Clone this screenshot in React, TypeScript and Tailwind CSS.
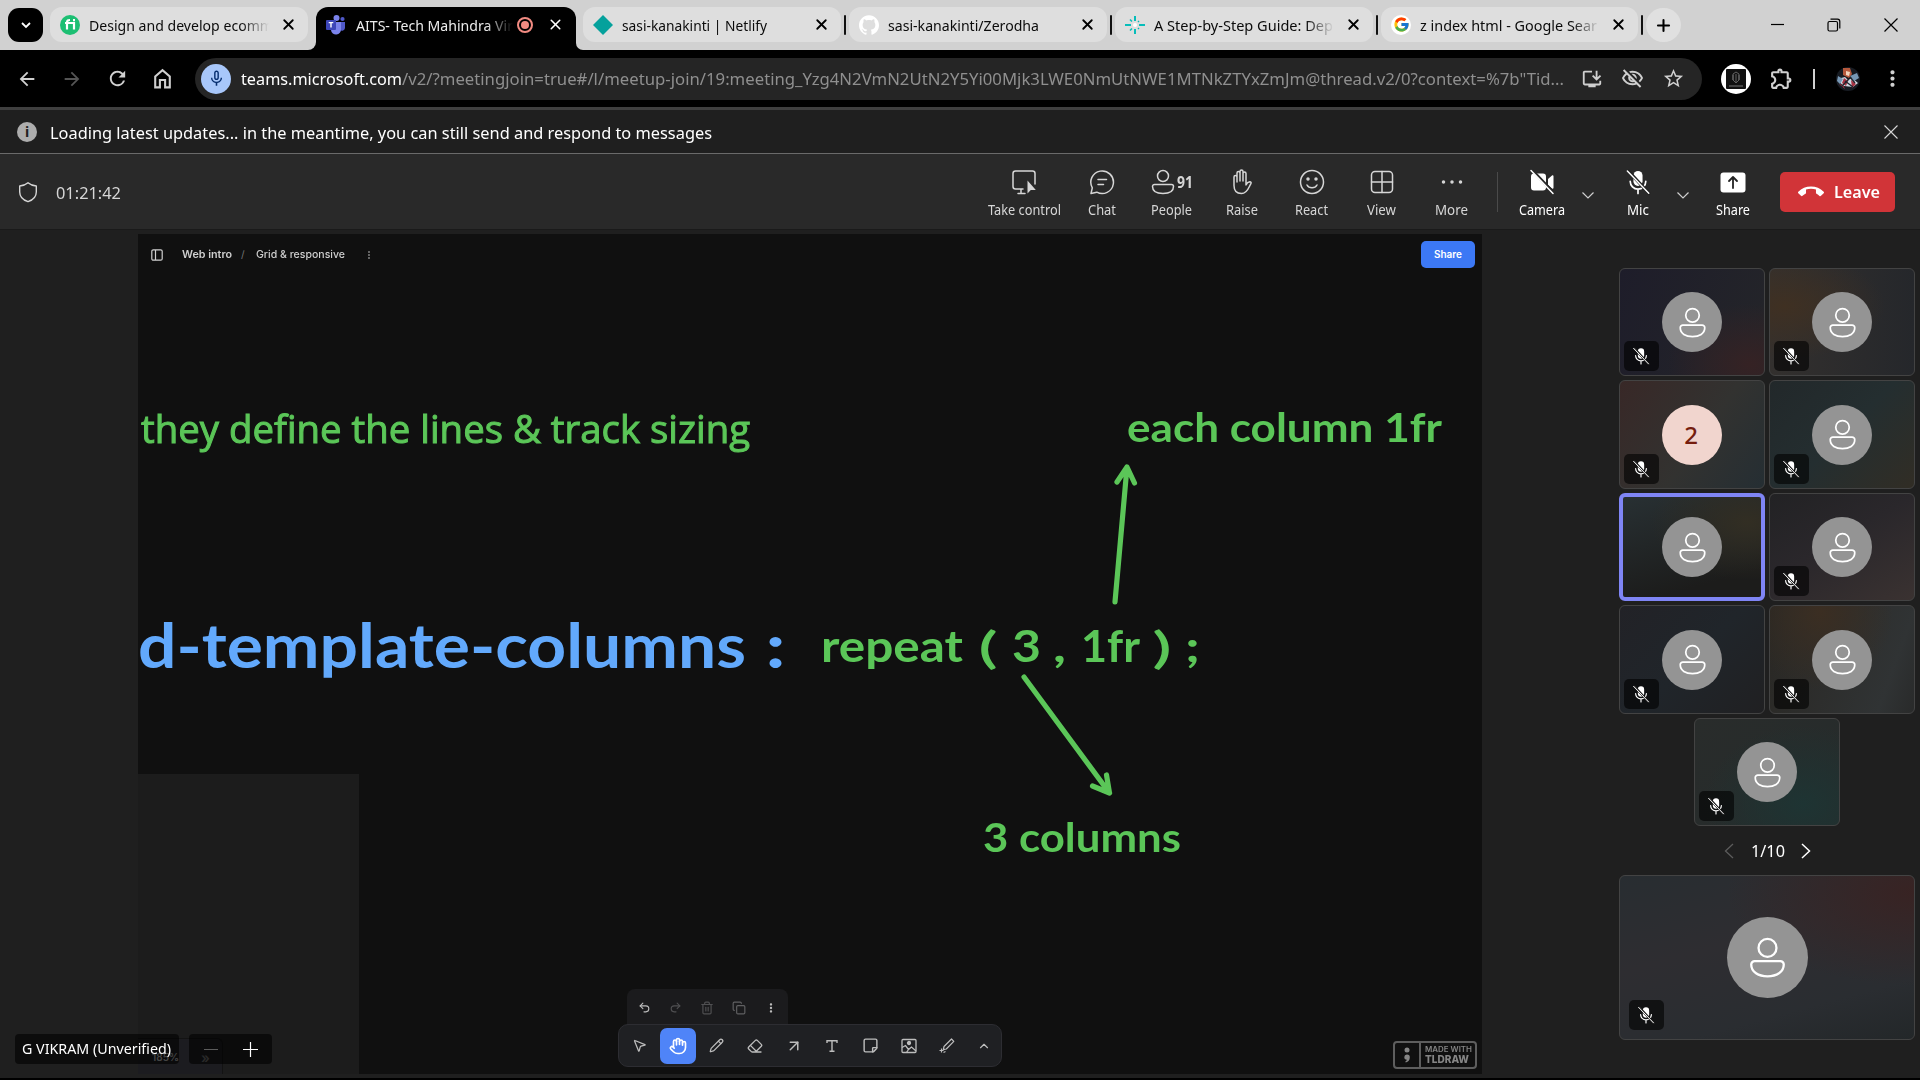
import { useLayoutEffect, useRef, useState } from "react";
import type { ReactNode } from "react";
import { SiGithub } from "react-icons/si";
import { FcGoogle } from "react-icons/fc";
import {
  MdArrowBack, MdArrowForward, MdRefresh, MdOutlineExtension, MdStarOutline,
  MdOutlineInstallDesktop, MdOutlineVisibilityOff, MdMicNone, MdCallEnd, MdMoreVert,
} from "react-icons/md";
import {
  Hand, Pencil, Eraser, ArrowUpRight, StickyNote, ChevronUp, Undo2, Redo2, Trash2, Copy,
  MousePointer2, X, Plus,
} from "lucide-react";

/* Text squeezed or stretched horizontally to a fixed measure. */
function Fit({ w, className = "", children }: { w: number; className?: string; children: ReactNode }) {
  const ref = useRef<HTMLSpanElement>(null);
  const [scale, setScale] = useState(1);
  useLayoutEffect(() => {
    if (ref.current) setScale(w / ref.current.getBoundingClientRect().width);
  }, [w]);
  return (
    <span className="flex shrink-0" style={{ width: w }}>
      <span ref={ref} className={`block shrink-0 origin-left whitespace-pre ${className}`} style={{ transform: `scaleX(${scale})` }}>
        {children}
      </span>
    </span>
  );
}

const Teams = () => (
  <svg viewBox="0 0 20 20" className="size-5">
    <circle cx="10.5" cy="3" r="3" fill="#7b83eb" />
    <circle cx="16.5" cy="4" r="2.1" fill="#5059c9" />
    <path d="M13 7h6v6a3 3 0 0 1-5 2z" fill="#5059c9" />
    <path d="M6 7h9v7a5 5 0 0 1-10 1z" fill="#7b83eb" />
    <rect x="0" y="5" width="10" height="10" rx="1" fill="#3d46b8" />
    <path d="M2.700 7.600h4.600M5 7.600v5" stroke="#fff" strokeWidth="1.400" />
  </svg>
);

const Diamond = () => (
  <svg viewBox="0 0 20 20" className="size-5"><path d="M10 0l10 10-10 10L0 10z" fill="#05a19c" /></svg>
);

const Spark = () => (
  <svg viewBox="0 0 20 20" className="size-5">
    <path d="M10 1v5M10 14v5M0 10h6M14 10h6" stroke="#06bdba" strokeWidth="2" />
    <path d="M5 4.500l2 2M5 15.500l2-2M13 7l1-1M13 13l1 1" stroke="#06bdba" strokeWidth="1.500" />
    <circle cx="10" cy="10" r="2" fill="#fff" />
  </svg>
);

function Tab({ icon, title, w, box, fade, sep }: {
  icon: ReactNode; title: string; w: number; box: string; fade?: boolean; sep?: boolean;
}) {
  return (
    <>
      <div className={`mt-[7px] flex h-[35px] shrink-0 items-center rounded-[12px] bg-[#dedede] pl-[10px] ${box}`}>
        <span className="flex w-[29px] shrink-0">{icon}</span>
        <div className={`flex flex-1 overflow-hidden ${fade ? "[mask-image:linear-gradient(90deg,#000_152px,transparent_180px)]" : ""}`}>
          <Fit w={w} className="text-[15px] leading-5 text-[#0b0b0b]">{title}</Fit>
        </div>
        <X className="mr-[11px] ml-[3px] size-[17px] text-black" strokeWidth={2.6} />
      </div>
      {sep && <div className="mx-[3px] mt-[15px] h-5 w-[2px] shrink-0 rounded bg-[#111]" />}
    </>
  );
}

function TabStrip() {
  return (
    <div className="flex h-[50px] items-start bg-[#d1d1d1]">
      <div className="mt-2 ml-2 flex h-[34px] w-[35px] shrink-0 items-center justify-center rounded-[11px] bg-black text-white">
        <svg viewBox="0 0 12 12" className="size-3"><path d="M2 4l4 4 4-4" fill="none" stroke="currentColor" strokeWidth="1.800" /></svg>
      </div>
      <div className="w-[7px] shrink-0" />
      <Tab box="w-[258px]" w={184} fade title="Design and develop ecomm"
        icon={<span className="flex size-5 items-center justify-center rounded-full bg-[#1dbf73] text-white"><svg viewBox="0 0 20 20" className="size-5"><path d="M5 8h9v6.500M7 14.500V7.500c0-2 1-2.500 3-2.500M13 5.200h2" fill="none" stroke="#fff" strokeWidth="2.200" /></svg></span>} />
      <div className="flex h-[50px] w-[275px] shrink-0">
        <div className="w-2 self-end bg-black"><div className="h-3 rounded-br-[10px] bg-[#d1d1d1]" /></div>
        <div className="mt-[7px] flex h-[43px] w-[260px] items-center rounded-t-[12px] bg-black pb-2 pl-[10px]">
          <span className="flex w-[30px] shrink-0"><Teams /></span>
          <div className="flex w-[157px] overflow-hidden [mask-image:linear-gradient(90deg,#000_130px,transparent_157px)]">
            <Fit w={157} className="text-[15px] leading-5 text-[#ececec]">AITS- Tech Mahindra Vir</Fit>
          </div>
          <span className="ml-[4px] flex size-4 items-center justify-center rounded-full border-2 border-[#f28b82]"><span className="size-2 rounded-full bg-[#f28b82]" /></span>
          <X className="ml-[14px] size-[17px] text-white" strokeWidth={2.2} />
        </div>
        <div className="w-[7px] self-end bg-black"><div className="h-3 rounded-bl-[10px] bg-[#d1d1d1]" /></div>
      </div>
      <Tab box="w-[258px]" w={145} sep title="sasi-kanakinti | Netlify" icon={<Diamond />} />
      <Tab box="w-[258px]" w={151} sep title="sasi-kanakinti/Zerodha" icon={<SiGithub className="size-5 text-white" />} />
      <Tab box="w-[258px]" w={179} fade sep title="A Step-by-Step Guide: Dep" icon={<Spark />} />
      <Tab box="w-[257px]" w={177} fade sep title="z index html - Google Sear" icon={<span className="flex size-5 items-center justify-center rounded-full bg-white"><FcGoogle className="size-[17px]" /></span>} />
      <div className="mt-2 flex h-[34px] w-[35px] shrink-0 items-center justify-center rounded-full bg-[#e0e0e0]"><Plus className="size-[19px] text-black" strokeWidth={2.6} /></div>
      <div className="ml-auto flex h-[50px] items-center text-black">
        <svg viewBox="0 0 14 14" className="mr-[42px] size-[14px]"><path d="M0 6.500h13" stroke="currentColor" strokeWidth="1.200" /></svg>
        <svg viewBox="0 0 14 14" className="mr-[43px] size-[14px]" fill="none" stroke="currentColor" strokeWidth="1.200"><rect x="1" y="3.500" width="9.500" height="9.500" rx="1.500" /><path d="M3.500 1.200h7a2.300 2.300 0 0 1 2.300 2.300v7" /></svg>
        <svg viewBox="0 0 14 14" className="mr-[22px] size-[14px]"><path d="M.5.500l13 13M13.500.500l-13 13" stroke="currentColor" strokeWidth="1.200" /></svg>
      </div>
    </div>
  );
}

function AddressBar() {
  return (
    <div className="flex h-[57px] items-center bg-black text-[#d0d0d0]">
      <MdArrowBack className="ml-[16px] size-[22px] shrink-0" />
      <MdArrowForward className="ml-[23px] size-[22px] shrink-0 text-[#555]" />
      <MdRefresh className="ml-[23px] size-[23px] shrink-0" />
      <svg viewBox="0 0 24 24" className="ml-[21px] size-[25px] shrink-0" fill="none" stroke="currentColor" strokeWidth="2"><path d="M5 10l7-6 7 6v10.500h-4.500v-7h-5v7H5z" /></svg>
      <div className="ml-[20px] flex h-[42px] w-[1507px] shrink-0 items-center rounded-full bg-[#252525] pl-[6px]">
        <span className="mr-[10px] flex size-[30px] items-center justify-center rounded-full bg-[#a8c7fa] text-[#062e6f]"><MdMicNone className="size-[19px]" /></span>
        <Fit w={161} className="text-[17px] text-white">teams.microsoft.com</Fit>
        <Fit w={1162} className="text-[17px] text-[#8f8f8f]">/v2/?meetingjoin=true#/l/meetup-join/19:meeting_Yzg4N2VmN2UtN2Y5Yi00Mjk3LWE0NmUtNWE1MTNkZTYxZmJm@thread.v2/0?context=%7b"Tid...</Fit>
        <div className="ml-auto flex items-center gap-[18px] pr-[17px]">
          <MdOutlineInstallDesktop className="size-[22px]" />
          <MdOutlineVisibilityOff className="size-[23px]" />
          <MdStarOutline className="size-[23px]" />
        </div>
      </div>
      <span className="ml-[19px] flex size-[30px] shrink-0 items-center justify-center rounded-full bg-white">
        <svg viewBox="0 0 20 20" className="size-[20px]"><rect width="20" height="20" rx="1" fill="#111" /><path d="M10 3l3 2v6l-3 3-3-3V5zM10 5v8M7 6v5M13 6v5" stroke="#777" fill="none" strokeWidth=".8" /><path d="M3 17h14" stroke="#777" strokeWidth="1" /></svg>
      </span>
      <MdOutlineExtension className="ml-[18px] size-[25px] shrink-0" />
      <span className="ml-[19px] h-5 w-[2px] bg-[#d0d0d0]" />
      <svg viewBox="0 0 24 24" className="ml-[21px] size-6">
        <circle cx="12" cy="12" r="12" fill="#171b22" />
        <path d="M7 1l7 0 2 6-3 4-6-3z" fill="#b5583c" /><path d="M10 4l4 1-1 4-3-1z" fill="#f2d4bd" />
        <path d="M5 11l4-1 3 3 4-2 6 5-5 4-9-1-5-4z" fill="#cfd9e2" /><path d="M2 9l5 3-3 5-3-3zM14 9l7-3 2 5-5 3z" fill="#7798b5" />
        <path d="M8 11l4 3-2 5-4-3zM15 13l5 4-4 4zM3 17l4 1 2 4z" fill="#a93343" /><path d="M9 14l8 6M5 20l8-8M14 10l5 6" stroke="#20242d" strokeWidth="1.300" />
      </svg>
      <MdMoreVert className="ml-[20px] size-[25px] shrink-0" />
    </div>
  );
}

const Ico = ({ children, className = "size-[26px]" }: { children: ReactNode; className?: string }) => (
  <svg viewBox="0 0 26 26" className={className} fill="none" stroke="currentColor" strokeWidth="1.500" strokeLinecap="round" strokeLinejoin="round">{children}</svg>
);

const Person = ({ className }: { className: string }) => (
  <svg viewBox="0 0 28 32" className={className} fill="none" stroke="currentColor" strokeWidth="1.800">
    <circle cx="14" cy="8.500" r="7" />
    <path d="M4 18.800h20a2.700 2.700 0 0 1 2.700 2.700c0 6-5.700 9.200-12.700 9.200S1.300 27.500 1.300 21.500A2.700 2.700 0 0 1 4 18.800z" />
  </svg>
);

const MicOff = ({ className }: { className: string }) => (
  <svg viewBox="0 0 20 20" className={className} fill="none" stroke="currentColor" strokeLinecap="round">
    <rect x="6.500" y="1.500" width="7" height="11.500" rx="3.500" fill="currentColor" stroke="none" />
    <path d="M4 9.500a6 6 0 0 0 12 0M10 15.800v3" strokeWidth="1.300" />
    <path d="M2.800 1.800l15.500 16.700" stroke="#222" strokeWidth="2.500" />
    <path d="M1.800 1.500l16.500 17.200" strokeWidth="1.100" />
  </svg>
);

function Tool({ label, w, box, bright, children }: { label: string; w: number; box: string; bright?: boolean; children: ReactNode }) {
  return (
    <div className={`flex shrink-0 flex-col items-center ${box} ${bright ? "text-white" : "text-[#d6d6d6]"}`}>
      <div className="flex h-[26px] items-center">{children}</div>
      <Fit w={w} className="mt-[5px] text-[13.5px] leading-5">{label}</Fit>
    </div>
  );
}

const Chevron = () => (
  <svg viewBox="0 0 12 12" className="mt-[20px] size-3 shrink-0 text-[#cfcfcf]"><path d="M.5 3.500L6 9l5.500-5.500" fill="none" stroke="currentColor" strokeWidth="1.200" /></svg>
);

function MeetingBar() {
  return (
    <div className="flex h-[76px] items-start border-b border-[#1a1a1a] bg-[#292929] pt-[15px]">
      <Ico className="mt-[11px] ml-[16px] size-6 text-[#d6d6d6]"><path d="M13 3c2.500 2.200 5.500 3.300 9 3.500V13c0 5-3 8.500-9 10.500C7 21.500 4 18 4 13V6.500C7.500 6.300 10.500 5.200 13 3z" /></Ico>
      <div className="mt-[12px] ml-[16px]"><Fit w={65} className="text-[17px] leading-6 text-[#d6d6d6]">01:21:42</Fit></div>
      <div className="ml-auto flex w-[940px] shrink-0">
        <Tool label="Take control" w={73} box="w-[88px]"><Ico><path d="M12 20H4.500A2.500 2.500 0 0 1 2 17.500v-13A2.500 2.500 0 0 1 4.500 2h17A2.500 2.500 0 0 1 24 4.500V15M10 20v4M7 24.500h7" /><path d="M16.500 11.500v13l3.300-3.500h5z" fill="currentColor" stroke="none" /></Ico></Tool>
        <Tool label="Chat" w={28} box="w-[67px]"><Ico><path d="M2 24.500l1.300-5.700a11.300 11.300 0 1 1 4.500 4.400zM9 10.500h8.500M9 15.500h5.500" /></Ico></Tool>
        <Tool label="People" w={41} box="w-[73px]"><Ico className="-ml-px size-[26px]"><circle cx="13" cy="7" r="5.500" /><path d="M4.500 15.500h17a2 2 0 0 1 2 2c0 5-4.500 7-10.500 7s-10.500-2-10.500-7a2 2 0 0 1 2-2z" /></Ico><span className="ml-px"><Fit w={16} className="text-[16px] leading-none font-bold">91</Fit></span></Tool>
        <Tool label="Raise" w={32} box="w-[67px]"><Ico className="mr-[2px] size-[26px]"><path d="M6 16.500V8a1.500 1.500 0 0 1 3 0v5V4a1.500 1.500 0 0 1 3 0v8V2.500a1.500 1.500 0 0 1 3 0V12 4.500a1.500 1.500 0 0 1 3 0V16c.8-1.800 2-3 3.800-3.200 1.200 0 1.700 1 1 2-2 3-3.200 9.700-9.300 9.700-5 0-7.500-2.500-7.500-8z" /></Ico></Tool>
        <Tool label="React" w={33} box="w-[73px]"><Ico><circle cx="13" cy="13" r="11.500" /><path d="M8 16c2 3.700 8 3.700 10 0" /><circle cx="9" cy="10" r="1" fill="currentColor" /><circle cx="17" cy="10" r="1" fill="currentColor" /></Ico></Tool>
        <Tool label="View" w={29} box="w-[67px]"><Ico><rect x="2.500" y="2.500" width="21" height="21" rx="3.500" /><path d="M13 2.500v21M2.500 13h21" /></Ico></Tool>
        <Tool label="More" w={33} box="w-[73px]"><Ico><circle cx="4.500" cy="13" r="1" fill="currentColor" /><circle cx="13" cy="13" r="1" fill="currentColor" /><circle cx="21.500" cy="13" r="1" fill="currentColor" /></Ico></Tool>
        <div className="mt-[3px] ml-[9px] h-10 w-px bg-[#4a4a4a]" />
        <Tool label="Camera" w={46} box="ml-1 w-[80px]" bright>
          <Ico><path d="M5 4.500h9a3 3 0 0 1 3 3v11a3 3 0 0 1-3 3H5a3 3 0 0 1-3-3v-11a3 3 0 0 1 3-3zM19 10l4-3.500c.8-.5 1.500-.2 1.500.8v11.500c0 1-.7 1.300-1.500.8L19 16z" fill="currentColor" stroke="none" /><path d="M3.500 1.500L25 24" stroke="#292929" strokeWidth="3" /><path d="M2 1.500l22 23" /></Ico>
        </Tool>
        <Chevron />
        <Tool label="Mic" w={22} box="w-[83px] pl-[5px]" bright><MicOff className="size-[26px]" /></Tool>
        <Chevron />
        <Tool label="Share" w={34} box="w-[88px]" bright><Ico><rect x="0.500" y="3.500" width="25" height="20" rx="3" fill="currentColor" stroke="none" /><path d="M13 19V8.500M9 12l4-4 4 4" stroke="#222" strokeWidth="1.800" /></Ico></Tool>
        <div className="mt-[3px] ml-[3px] flex h-10 w-[115px] shrink-0 items-center rounded-[5px] bg-[#d13438] pl-[18px] text-white">
          <MdCallEnd className="mr-[10px] size-[26px]" />
          <Fit w={46} className="text-[16.5px] font-semibold">Leave</Fit>
        </div>
      </div>
    </div>
  );
}

function Tile({ box, bg, big, letter, active }: { box: string; bg: string; big?: boolean; letter?: string; active?: boolean }) {
  return (
    <div className={`relative flex items-center justify-center rounded-[6px] ${active ? "border-4 border-[#7f85f5]" : "border border-[#434343]"} ${box} ${bg}`}>
      {letter ? (
        <span className="flex size-[60px] items-center justify-center rounded-full bg-[#f1d5ce] pr-[2px] text-[24px] font-medium text-[#751d0e]">{letter}</span>
      ) : (
        <span className={`flex items-center justify-center rounded-full bg-[#949494] text-white ${big ? "size-[81px]" : "size-[60px]"}`}>
          <Person className={big ? "h-[41px] w-[37px]" : "h-[31px] w-[27px]"} />
        </span>
      )}
      {!active && (
        <span className={`absolute flex h-[30px] w-[35px] items-center justify-center rounded-[5px] bg-black/60 pr-[2px] text-white ${big ? "bottom-[9px] left-[9px]" : "bottom-1 left-1"}`}>
          <MicOff className="size-[18px]" />
        </span>
      )}
    </div>
  );
}

function Roster() {
  return (
    <div className="flex w-[438px] shrink-0 flex-col pt-[34px] pl-[137px]">
      <div className="flex w-[296px] flex-wrap justify-center gap-1">
        <Tile box="h-[108px] w-[146px]" bg="bg-[radial-gradient(at_90%_90%,#352224,transparent_45%),linear-gradient(110deg,#1e1d2a,#242529)]" />
        <Tile box="h-[108px] w-[146px]" bg="bg-[radial-gradient(at_10%_35%,#3f3022,transparent_55%),linear-gradient(90deg,#33302e,#25272b)]" />
        <Tile box="h-[109px] w-[146px]" letter="2" bg="bg-[linear-gradient(125deg,#382827,#323230_55%,#252e33)]" />
        <Tile box="h-[109px] w-[146px]" bg="bg-[linear-gradient(135deg,#22282a,#242e30_50%,#312d25)]" />
        <Tile box="h-[108px] w-[146px]" active bg="bg-[radial-gradient(at_90%_25%,#322e23,transparent_55%),linear-gradient(165deg,#283033,#1c1c1b_80%)]" />
        <Tile box="h-[108px] w-[146px]" bg="bg-[linear-gradient(150deg,#222224,#2a272b_45%,#3a3231)]" />
        <Tile box="h-[109px] w-[146px]" bg="bg-[linear-gradient(135deg,#222227,#20252a_50%,#202022)]" />
        <Tile box="h-[109px] w-[146px]" bg="bg-[radial-gradient(at_35%_5%,#3b2e22,transparent_55%),linear-gradient(110deg,#292723,#303334_80%,#292a2a)]" />
        <Tile box="h-[108px] w-[146px]" bg="bg-[radial-gradient(at_75%_80%,#1e3433,transparent_65%),linear-gradient(140deg,#292c2b,#252b2b)]" />
      </div>
      <div className="flex h-[49px] w-[296px] items-center justify-center text-white">
        <svg viewBox="0 0 10 16" className="mr-[17px] h-4 w-[10px] text-[#5c5c5c]"><path d="M9 1L1.500 8 9 15" fill="none" stroke="currentColor" strokeWidth="1.300" /></svg>
        <Fit w={34} className="text-[17px]">1/10</Fit>
        <svg viewBox="0 0 10 16" className="ml-[16px] h-4 w-[10px]"><path d="M1 1l7.500 7L1 15" fill="none" stroke="currentColor" strokeWidth="1.500" /></svg>
      </div>
      <Tile big box="h-[165px] w-[296px]" bg="bg-[radial-gradient(at_100%_10%,#382323,transparent_45%),linear-gradient(165deg,#282d31,#2e2d31_40%,#2a2d31_75%,#232729)]" />
    </div>
  );
}

const GREEN = "font-['Lato',sans-serif] font-bold text-[#5bc658]";

/* Free-form whiteboard: every note sits at its own canvas position. */
function Board() {
  return (
    <div className="relative h-[840px] w-[1344px] shrink-0 overflow-hidden bg-[#101010]">
      <div className="flex h-[41px] items-center font-['Inter',sans-serif] text-[#cfcfcf]">
        <svg viewBox="0 0 12 12" className="ml-[13px] size-3" fill="none" stroke="currentColor" strokeWidth="1.200"><rect x=".8" y=".8" width="10.400" height="10.400" rx="1.500" /><path d="M4.500 1v10" /></svg>
        <Fit w={50} className="ml-[19px] text-[10.500px] font-semibold">Web intro</Fit>
        <span className="ml-[28px] text-[10px] text-[#777]">/</span>
        <span className="ml-[11px]"><Fit w={89} className="text-[10.500px] font-medium">Grid &amp; responsive</Fit></span>
        <MdMoreVert className="ml-[18px] size-[12px] text-[#777]" />
        <span className="mr-[7px] ml-auto flex h-[27px] w-[54px] items-center justify-center rounded-[5px] bg-[#3c78f5] text-[10px] font-semibold text-white">Share</span>
      </div>

      <div className="absolute top-[172px] left-[3px]"><Fit w={609} className="font-['Open_Sans',sans-serif] text-[38px] leading-[44px] text-[#5bc658] [-webkit-text-stroke:1px_#5bc658]">they define the lines &amp; track sizing</Fit></div>
      <div className="absolute top-[375px] left-0 leading-[72px]">
        <Fit w={608} className="font-['Lato',sans-serif] text-[61px] font-bold text-[#62a9fc]">d-template-columns</Fit>
      </div>
      <div className="absolute top-[375px] left-[628px] leading-[72px]"><Fit w={19} className="font-['Lato',sans-serif] text-[61px] font-black text-[#62a9fc]">:</Fit></div>
      <div className={`absolute top-[169px] left-[989px] text-[40px] leading-[48px] ${GREEN}`}><Fit w={315}>each column 1fr</Fit></div>
      <div className={`absolute top-[386px] left-[683px] text-[43px] leading-[52px] ${GREEN}`}><Fit w={142}>repeat</Fit></div>
      <div className={`absolute top-[387px] left-[841px] text-[43px] leading-[52px] ${GREEN}`}><Fit w={18} className="font-normal [-webkit-text-stroke:1px_#5bc658]">(</Fit></div>
      <div className={`absolute top-[386px] left-[874px] text-[43px] leading-[52px] ${GREEN}`}><Fit w={29}>3</Fit></div>
      <div className={`absolute top-[386px] left-[915px] text-[43px] leading-[52px] ${GREEN}`}><Fit w={13}>,</Fit></div>
      <div className={`absolute top-[386px] left-[943px] text-[43px] leading-[52px] ${GREEN}`}><Fit w={59}>1fr</Fit></div>
      <div className={`absolute top-[387px] left-[1015px] text-[43px] leading-[52px] ${GREEN}`}><Fit w={18} className="font-normal [-webkit-text-stroke:1px_#5bc658]">)</Fit></div>
      <div className={`absolute top-[386px] left-[1047px] text-[43px] leading-[52px] ${GREEN}`}><Fit w={15}>;</Fit></div>
      <div className={`absolute top-[579px] left-[845px] text-[40px] leading-[48px] ${GREEN}`}><Fit w={198}>3 columns</Fit></div>
      <svg viewBox="0 0 120 350" className="absolute top-[225px] left-[880px] h-[350px] w-[120px]" fill="none" stroke="#5bc658" strokeWidth="5.200" strokeLinecap="round" strokeLinejoin="round">
        <path d="M97 143L109 8M99 23L109 8L116.500 24" />
        <path d="M6 218L91.500 334M74.500 327L91.500 334L88.500 316" />
      </svg>

      <div className="absolute top-[540px] left-0 h-[300px] w-[221px] bg-[#1c1c1c]" />
      <div className="absolute top-[804px] left-0 flex h-9 w-[85px] rounded-tr-[6px] border-t border-r border-[#131313] bg-[#1c1c20] pt-[11px] pl-[14px] font-['Inter',sans-serif] text-[10px] leading-[15px] font-semibold text-[#aaa]">
        <span>185%</span><span className="ml-[22px] text-[14px] text-[#666]">»</span>
      </div>

      <div className="absolute top-[755px] left-[480px] flex flex-col text-[#bdbdbd]">
        <div className="ml-[9px] flex h-[36px] w-[161px] items-center gap-[18px] rounded-t-[8px] bg-[#1b1b1d] pt-px pl-[11px]">
          <Undo2 className="size-[13px]" /><Redo2 className="size-[13px] text-[#505052]" /><Trash2 className="size-[14px] text-[#505052]" /><Copy className="size-[14px] text-[#606062]" /><MdMoreVert className="size-[14px]" />
        </div>
        <div className="-mt-px flex h-[43px] w-[384px] items-center rounded-[10px] border border-[#2d2d32] bg-[#1f2023]">
          <span className="flex w-[41px] shrink-0 justify-center"><MousePointer2 className="size-[15px]" /></span>
          <span className="flex size-9 shrink-0 items-center justify-center rounded-[7px] bg-[#4f84f8] text-white"><Hand className="size-[18px]" strokeWidth={2.2} /></span>
          <span className="flex w-[40px] shrink-0 justify-center"><Pencil className="size-[15px]" /></span>
          <span className="flex w-[38px] shrink-0 justify-center"><Eraser className="size-[16px]" /></span>
          <span className="flex w-[39px] shrink-0 justify-center"><ArrowUpRight className="size-[18px]" /></span>
          <span className="flex w-[38px] shrink-0 justify-center">
            <svg viewBox="0 0 14 14" className="size-[14px]" fill="none" stroke="currentColor" strokeWidth="1.400"><path d="M2 4V1.700h10V4M7 1.700v10.600M4.500 12.300h5" /></svg>
          </span>
          <span className="flex w-[38px] shrink-0 justify-center"><StickyNote className="size-[17px] -scale-y-100" /></span>
          <span className="flex w-[39px] shrink-0 justify-center">
            <svg viewBox="0 0 16 16" className="size-4" fill="none" stroke="currentColor" strokeWidth="1.300"><rect x="1" y="1.500" width="14" height="13" rx="1" /><path d="M1 9.500l3.500-2 3 4 3-2.500L15 13M5.500 14.500l2-3" /><circle cx="8" cy="5" r="1.500" fill="currentColor" /></svg>
          </span>
          <span className="flex w-[38px] shrink-0 justify-center"><svg viewBox="0 0 16 16" className="size-4" fill="none" stroke="currentColor" strokeWidth="1.200" strokeLinejoin="round"><path d="M5 8.500L12.500 1l2.300 2.300L7.300 11l-3 .7zM2.500 10.500v4M.5 12.500h4M4.500 14.500l2-1" /></svg></span>
          <span className="flex w-[36px] shrink-0 justify-center"><ChevronUp className="size-[14px]" /></span>
        </div>
      </div>

      <div className="absolute top-[807px] left-[1255px] flex h-[28px] w-[84px] rounded-[4px] border-2 border-[#5e5e5e] font-['Inter',sans-serif] text-[#858585]">
        <span className="flex w-[26px] shrink-0 items-center justify-center border-r-2 border-[#5e5e5e]">
          <svg viewBox="0 0 8 18" className="h-[18px] w-2" fill="currentColor"><circle cx="4" cy="4" r="2.500" /><path d="M4 8.500a2.800 2.800 0 0 1 2.800 3c0 2.500-1.500 4.500-4 5l-.6-1c1-.4 1.500-1 1.600-1.800A2.600 2.600 0 0 1 4 8.500z" /></svg>
        </span>
        <span className="flex flex-col pt-[2px] pl-1">
          <Fit w={47} className="text-[7.500px] leading-[9px] font-semibold">MADE WITH</Fit>
          <Fit w={44} className="text-[10.500px] leading-[11px] font-extrabold">TLDRAW</Fit>
        </span>
      </div>
    </div>
  );
}

export default function App() {
  return (
    <div className="relative flex h-[1080px] w-[1920px] flex-col overflow-hidden bg-black font-['Noto_Sans',sans-serif]">
      <TabStrip />
      <AddressBar />
      <div className="flex h-[47px] items-center border-t-[3px] border-b border-t-[#3f3f3f] border-b-[#6a6a6a] bg-[#1f1f1f]">
        <span className="ml-[17px] flex size-[20px] shrink-0 items-center justify-center rounded-full bg-[#adadad] text-[14px] leading-none font-bold text-[#222]">i</span>
        <div className="ml-[13px] flex"><Fit w={662} className="mt-[2px] text-[17px] leading-6 text-white">Loading latest updates... in the meantime, you can still send and respond to messages</Fit></div>
        <svg viewBox="0 0 14 14" className="mr-[22px] ml-auto size-[14px] text-[#d6d6d6]"><path d="M.5.500l13 13M13.500.500l-13 13" stroke="currentColor" strokeWidth="1.100" /></svg>
      </div>
      <MeetingBar />
      <div className="flex h-[848px] bg-[#1f1f1f]">
        <div className="w-[138px] shrink-0" />
        <div className="pt-1"><Board /></div>
        <div className="flex pt-1"><Roster /></div>
      </div>
      <div className="absolute top-[1034px] left-[15px] flex gap-[10px]">
        <div className="flex h-[30px] w-[164px] items-center rounded-[4px] bg-black/60 pl-[7px]"><Fit w={149} className="text-[14.500px] text-white">G VIKRAM (Unverified)</Fit></div>
        <div className="flex h-[30px] w-[83px] items-center rounded-[4px] bg-black/60">
          <span className="ml-[15px] h-px w-[14px] bg-[#5c5c5c]" />
          <svg viewBox="0 0 15 15" className="ml-[25px] size-[15px] text-white"><path d="M7.500 0v15M0 7.500h15" stroke="currentColor" strokeWidth="1.200" /></svg>
        </div>
      </div>
    </div>
  );
}
